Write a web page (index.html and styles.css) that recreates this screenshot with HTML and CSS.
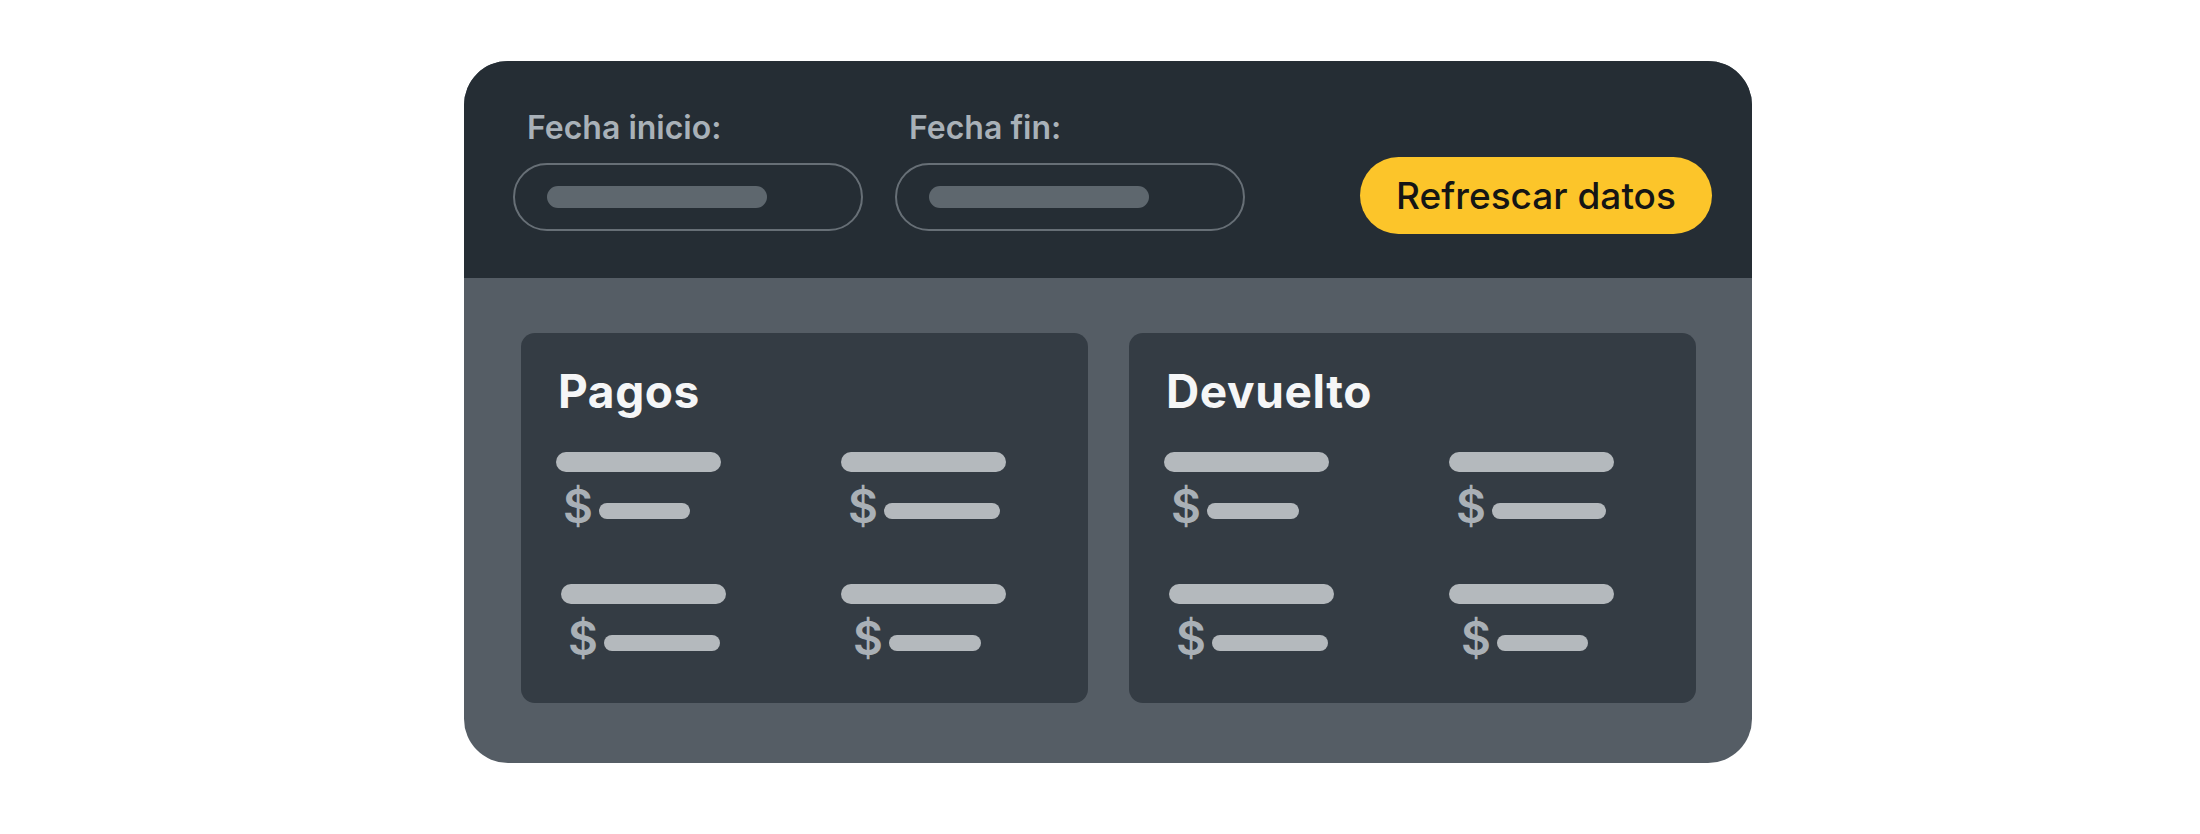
FILE: index.html
```html
<!DOCTYPE html>
<html lang="es">
<head>
<meta charset="utf-8">
<title>Panel de pagos</title>
<link rel="stylesheet" href="styles.css">
</head>
<body>
<div class="stage">
  <section class="card">
    <header class="toolbar">
      <div class="fields">
        <label class="field">
          <span class="field-label">Fecha inicio:</span>
          <span class="input"><span class="input-bar"></span></span>
        </label>
        <label class="field">
          <span class="field-label">Fecha fin:</span>
          <span class="input"><span class="input-bar"></span></span>
        </label>
      </div>
      <button class="refresh" type="button">Refrescar datos</button>
    </header>
    <div class="content">
      <article class="panel">
        <h2 class="panel-title">Pagos</h2>
        <div class="grid">
          <div class="item"><span class="bar-long"></span><div class="amount"><span class="cur">$</span><span class="bar-short" style="width:91px"></span></div></div>
          <div class="item"><span class="bar-long"></span><div class="amount"><span class="cur">$</span><span class="bar-short" style="width:116px"></span></div></div>
          <div class="item nudge"><span class="bar-long"></span><div class="amount"><span class="cur">$</span><span class="bar-short" style="width:116px"></span></div></div>
          <div class="item"><span class="bar-long"></span><div class="amount shift"><span class="cur">$</span><span class="bar-short" style="width:92px"></span></div></div>
        </div>
      </article>
      <article class="panel">
        <h2 class="panel-title">Devuelto</h2>
        <div class="grid">
          <div class="item"><span class="bar-long"></span><div class="amount"><span class="cur">$</span><span class="bar-short" style="width:92px"></span></div></div>
          <div class="item"><span class="bar-long"></span><div class="amount"><span class="cur">$</span><span class="bar-short" style="width:114px"></span></div></div>
          <div class="item nudge"><span class="bar-long"></span><div class="amount"><span class="cur">$</span><span class="bar-short" style="width:116px"></span></div></div>
          <div class="item"><span class="bar-long"></span><div class="amount shift"><span class="cur">$</span><span class="bar-short" style="width:91px"></span></div></div>
        </div>
      </article>
    </div>
  </section>
</div>
</body>
</html>
```

FILE: styles.css
```css
* { box-sizing: border-box; }

html, body {
  margin: 0;
  padding: 0;
  background: #ffffff;
  font-family: Inter, "Noto Sans", "Liberation Sans", sans-serif;
}

.stage {
  display: flex;
  justify-content: center;
  padding: 61px 0 0 16px;
}

.card {
  width: 1288px;
  border-radius: 44px;
  overflow: hidden;
  background: #555d65;
}

/* ---------- toolbar ---------- */
.toolbar {
  display: flex;
  align-items: flex-end;
  height: 217px;
  padding: 47px 40px 47px 49px;
  background: #252d34;
}

.fields {
  display: flex;
  gap: 32px;
}

.field {
  display: flex;
  flex-direction: column;
  gap: 15px;
}

.field-label {
  padding-left: 14px;
  font-size: 32px;
  line-height: 40px;
  font-weight: 600;
  color: #a9b1b8;
}

.input {
  display: flex;
  align-items: center;
  width: 350px;
  height: 68px;
  padding-left: 32px;
  border: 2.5px solid #676f76;
  border-radius: 34px;
}

.input-bar {
  width: 220px;
  height: 22px;
  border-radius: 11px;
  background: #5e676e;
}

.refresh {
  margin-left: auto;
  margin-bottom: -3px;
  width: 352px;
  height: 77px;
  border: 0;
  border-radius: 39px;
  background: #fcc52a;
  color: #151515;
  font-family: Inter, "Noto Sans", sans-serif;
  font-size: 37px;
  font-weight: 500;
  padding: 0;
}

/* ---------- content ---------- */
.content {
  display: grid;
  grid-template-columns: 567px 567px;
  gap: 41px;
  padding: 55px 56px 60px 57px;
}

.panel {
  border-radius: 14px;
  background: #343c44;
  padding: 32px 0 43px 37px;
}

.panel-title {
  margin: 0 0 35px;
  font-size: 46px;
  line-height: 52px;
  font-weight: 700;
  letter-spacing: 0.6px;
  color: #f5f6f7;
}

.grid {
  display: grid;
  grid-template-columns: 285px 1fr;
  row-gap: 56px;
  margin-left: -2px;
}

.item {
  display: flex;
  flex-direction: column;
  align-items: flex-start;
}

.item.nudge { padding-left: 5px; }

.bar-long {
  width: 165px;
  height: 20px;
  border-radius: 10px;
  background: #b4b9bd;
}

.amount {
  display: flex;
  align-items: flex-start;
  margin-top: 12px;
  padding-left: 7px;
  height: 44px;
}

.amount.shift { padding-left: 12px; }

.cur {
  font-size: 46px;
  line-height: 44px;
  font-weight: 600;
  color: #a9b0b6;
}

.bar-short {
  margin-top: 19px;
  margin-left: 6px;
  height: 16px;
  border-radius: 8px;
  background: #b4b9bd;
}
```
